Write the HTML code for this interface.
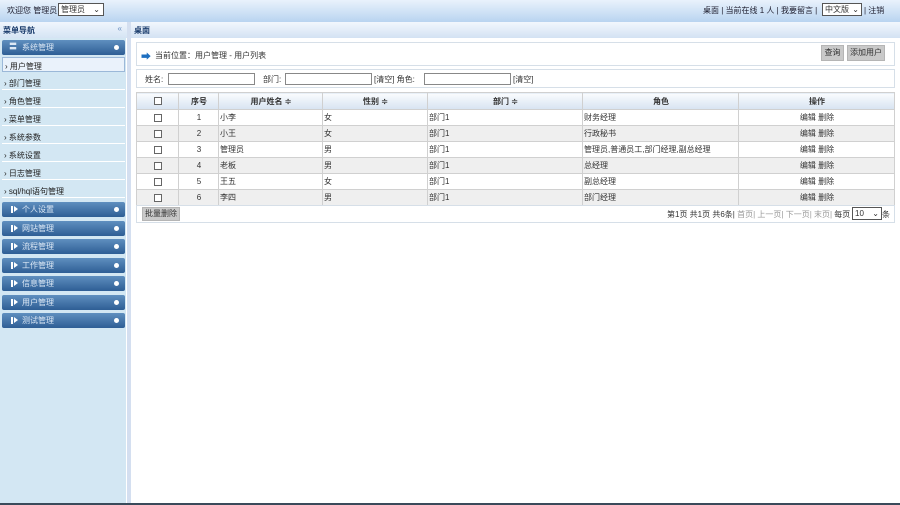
<!DOCTYPE html><html><head><meta charset="utf-8"><style>
*{margin:0;padding:0;box-sizing:border-box}
body{width:900px;height:505px;overflow:hidden;font-family:"Liberation Sans","Noto Sans CJK SC",sans-serif;font-size:8px;color:#333;background:#fff;position:relative}
.top{position:absolute;left:0;top:0;width:900px;height:22px;background:linear-gradient(#e9f2fc,#b9d4f0);}
.abs{position:absolute;white-space:nowrap}
.sel{position:absolute;border:1px solid #555;background:#fff;height:13px;font-size:8px;line-height:11px;padding-left:2px}
.side{position:absolute;left:0;top:22px;width:127px;height:481px;background:#d3e7f3;border-right:1px solid #fff}
.split{position:absolute;left:127px;top:22px;width:4px;height:481px;background:#d4dff0}
.sh{position:absolute;left:0;top:0;width:127px;height:16px;background:linear-gradient(#f0f6fd,#d5e4f4);font-weight:bold;color:#1b3c6c;padding:3px 0 0 3px}
.grp{position:absolute;left:2px;width:123px;height:15px;background:linear-gradient(#5f8fbf,#2e5e95);border-radius:2px;color:#dce8f5;padding:2px 0 0 20px;font-size:8px}
.grp:after{content:"";position:absolute;right:6px;top:5px;width:5px;height:5px;border-radius:50%;background:#fff}
.grp i{position:absolute;left:9px;top:4px;width:2px;height:7px;background:#fff}
.grp b{position:absolute;left:12px;top:4px;border-left:4px solid #fff;border-top:3.5px solid transparent;border-bottom:3.5px solid transparent}
.it{position:absolute;left:2px;width:123px;height:15px;color:#222;padding:3px 0 0 2px;border-bottom:1px solid #fff;font-size:8px}
.hd{position:absolute;left:131px;top:22px;width:769px;height:16px;background:linear-gradient(#f2f7fd,#d3e2f3);font-weight:bold;color:#1b3c6c;padding:3px 0 0 3px}
.box{position:absolute;border:1px solid #d6dfe8;background:#fff}
.btn{position:absolute;background:#c9c9c9;border:1px solid #b5b5b5;color:#333;height:16px;line-height:14px;text-align:center}
.in{position:absolute;border:1px solid #888;height:12px;background:#fff}
table{position:absolute;left:136px;top:92px;width:759px;border-collapse:collapse}
td{height:16px;border:1px solid #d0d0d0;font-size:8px;padding-left:1px}
tr.h td{height:17px;background:linear-gradient(#fafcfe,#d7e3f1);font-weight:bold;text-align:center;color:#333}
tr:nth-child(odd):not(.h) td{background:#efefef}
.c{text-align:center}
.cb{display:inline-block;width:8px;height:8px;border:1px solid #666;background:#fff;vertical-align:middle}
</style></head><body>
<div class="top"></div>
<div class="abs" style="left:7px;top:5px;color:#223">欢迎您 管理员</div>
<div class="sel" style="left:58px;top:3px;width:46px">管理员<span style="position:absolute;right:3px">⌄</span></div>
<div class="abs" style="left:703px;top:5px;color:#223">桌面 | 当前在线 1 人 | 我要留言 |</div>
<div class="sel" style="left:822px;top:3px;width:40px">中文版<span style="position:absolute;right:2px">⌄</span></div>
<div class="abs" style="left:864px;top:5px;color:#223">| 注销</div>

<div class="side">
<div class="sh">菜单导航<span style="position:absolute;right:5px;top:2px;color:#6a8fc0;font-weight:normal">«</span></div>
<div class="grp" style="top:18px"><span style="position:absolute;left:7px;top:1px">〓</span>系统管理</div>
<div class="it" style="top:35px;background:#eaf2fb;border:1px solid #9bb8d8">› 用户管理</div>
<div class="it" style="top:53px">› 部门管理</div>
<div class="it" style="top:71px">› 角色管理</div>
<div class="it" style="top:89px">› 菜单管理</div>
<div class="it" style="top:107px">› 系统参数</div>
<div class="it" style="top:125px">› 系统设置</div>
<div class="it" style="top:143px">› 日志管理</div>
<div class="it" style="top:161px">› sql/hql语句管理</div>
<div class="grp" style="top:180px"><i></i><b></b>个人设置</div>
<div class="grp" style="top:198.5px"><i></i><b></b>网站管理</div>
<div class="grp" style="top:217px"><i></i><b></b>流程管理</div>
<div class="grp" style="top:235.5px"><i></i><b></b>工作管理</div>
<div class="grp" style="top:254px"><i></i><b></b>信息管理</div>
<div class="grp" style="top:272.5px"><i></i><b></b>用户管理</div>
<div class="grp" style="top:291px"><i></i><b></b>测试管理</div>
</div>
<div class="split"></div>
<div class="hd">桌面</div>

<div class="box" style="left:136px;top:42px;width:759px;height:24px"></div>
<div class="abs" style="left:141px;top:48px;color:#1e6fc0;font-size:10px">➡</div>
<div class="abs" style="left:155px;top:50px">当前位置：用户管理 - 用户列表</div>
<div class="btn" style="left:821px;top:45px;width:23px">查询</div>
<div class="btn" style="left:847px;top:45px;width:38px">添加用户</div>

<div class="box" style="left:136px;top:69px;width:759px;height:19px"></div>
<div class="abs" style="left:145px;top:74px">姓名:</div>
<div class="in" style="left:168px;top:73px;width:87px"></div>
<div class="abs" style="left:263px;top:74px">部门:</div>
<div class="in" style="left:285px;top:73px;width:87px"></div>
<div class="abs" style="left:374px;top:74px">[清空] 角色:</div>
<div class="in" style="left:424px;top:73px;width:87px"></div>
<div class="abs" style="left:513px;top:74px">[清空]</div>

<table>
<tr class="h"><td style="width:42px"><span class="cb"></span></td><td style="width:40px">序号</td><td style="width:104px">用户姓名 ≑</td><td style="width:105px">性别 ≑</td><td style="width:155px">部门 ≑</td><td style="width:156px">角色</td><td>操作</td></tr>
<tr><td class="c"><span class="cb"></span></td><td class="c">1</td><td>小李</td><td>女</td><td>部门1</td><td>财务经理</td><td class="c">编辑 删除</td></tr>
<tr><td class="c"><span class="cb"></span></td><td class="c">2</td><td>小王</td><td>女</td><td>部门1</td><td>行政秘书</td><td class="c">编辑 删除</td></tr>
<tr><td class="c"><span class="cb"></span></td><td class="c">3</td><td>管理员</td><td>男</td><td>部门1</td><td>管理员,普通员工,部门经理,副总经理</td><td class="c">编辑 删除</td></tr>
<tr><td class="c"><span class="cb"></span></td><td class="c">4</td><td>老板</td><td>男</td><td>部门1</td><td>总经理</td><td class="c">编辑 删除</td></tr>
<tr><td class="c"><span class="cb"></span></td><td class="c">5</td><td>王五</td><td>女</td><td>部门1</td><td>副总经理</td><td class="c">编辑 删除</td></tr>
<tr><td class="c"><span class="cb"></span></td><td class="c">6</td><td>李四</td><td>男</td><td>部门1</td><td>部门经理</td><td class="c">编辑 删除</td></tr>
</table>
<div class="box" style="left:136px;top:205px;width:759px;height:18px"></div>
<div class="btn" style="left:142px;top:207px;width:38px;height:14px;line-height:12px">批量删除</div>
<div class="abs" style="left:667px;top:209px">第1页 共1页 共6条| <span style="color:#999">首页| 上一页| 下一页| 末页|</span> 每页</div>
<div class="sel" style="left:852px;top:207px;width:30px">10<span style="position:absolute;right:2px">⌄</span></div>
<div class="abs" style="left:882px;top:209px">条</div>
<div style="position:absolute;left:0;top:503px;width:900px;height:2px;background:#3a4a5a"></div>
</body></html>
